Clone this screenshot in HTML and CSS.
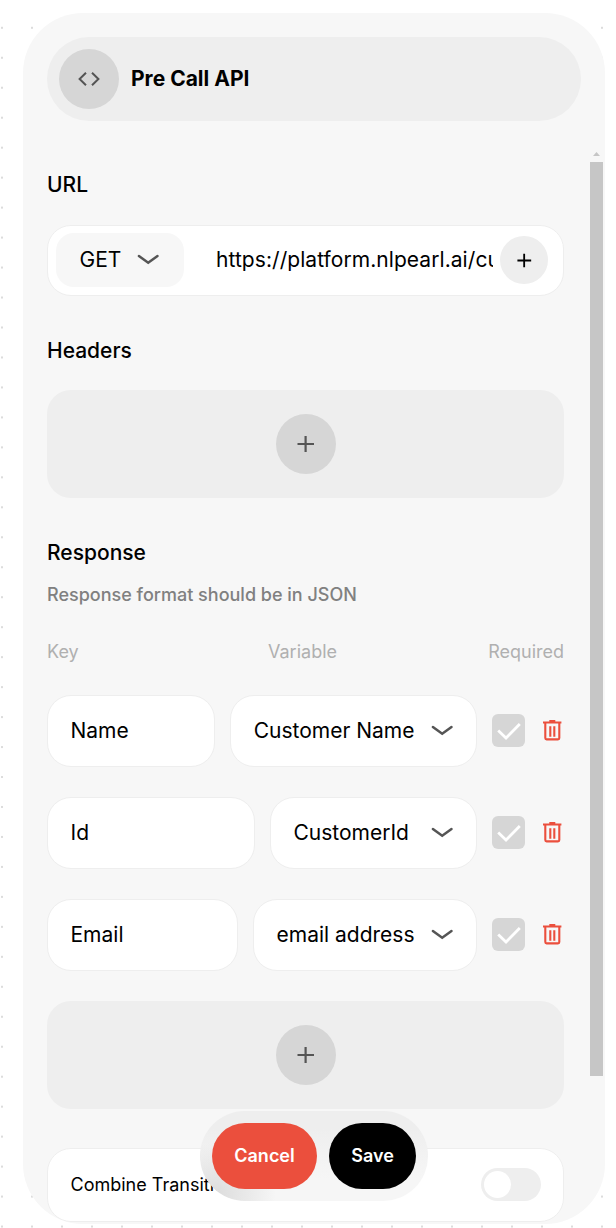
FILE: index.html
```
<!DOCTYPE html>
<html lang="en">
<head>
<meta charset="utf-8">
<title>Pre Call API</title>
<link rel="stylesheet" href="styles.css">
</head>
<body>
<svg class="defs" width="0" height="0" aria-hidden="true">
  <symbol id="chevron" viewBox="0 0 24 14"><path d="M2.9 3 12.2 9.8 21.5 3" fill="none" stroke="#555" stroke-width="2.5" stroke-linecap="round" stroke-linejoin="miter"/></symbol>
  <symbol id="plus" viewBox="0 0 18 18"><path d="M.5 9h16.5M8.6 1v16" fill="none" stroke="currentColor" stroke-width="2.2"/></symbol>
  <symbol id="check" viewBox="0 0 24 18"><path d="M1.2 8.6 9 16 22.8 2" fill="none" stroke="#fff" stroke-width="2.8"/></symbol>
  <symbol id="trash" viewBox="0 0 20 24"><path d="M1 4.5h18.4M7.3 3h6M3.3 5v15.1q0 1.3 1.3 1.3h11.4q1.3 0 1.3-1.3V5M8.3 8.3v10.4M12.3 8.3v10.4" fill="none" stroke="#eb4f3d" stroke-width="2.1"/></symbol>
</svg>
<main class="panel">
  <header class="header">
    <span class="circle"><svg class="code" viewBox="0 0 22 14"><path d="M8 .8 1.6 7 8 13.2M14 .8 20.4 7 14 13.2" fill="none" stroke="#555" stroke-width="2"/></svg></span>
    <h1 class="title">Pre Call API</h1>
  </header>
  <div class="scroll">
    <div class="content">
      <h2 class="heading heading-url">URL</h2>
      <div class="url-box">
        <div class="method"><span>GET</span><svg class="chevron"><use href="#chevron"/></svg></div>
        <div class="url">https://platform.nlpearl.ai/cu</div>
        <button class="url-add"><svg class="plus-small"><use href="#plus"/></svg></button>
      </div>
      <h2 class="heading heading-headers">Headers</h2>
      <div class="add-box"><button class="circle"><svg class="plus"><use href="#plus"/></svg></button></div>
      <h2 class="heading heading-response">Response</h2>
      <p class="hint">Response format should be in JSON</p>
      <div class="labels"><span>Key</span><span>Variable</span><span>Required</span></div>
      <div class="rows">
        <div class="row">
          <div class="field key">Name</div>
          <div class="field select"><span>Customer Name</span><svg class="chevron"><use href="#chevron"/></svg></div>
          <span class="checkbox"><svg class="check"><use href="#check"/></svg></span>
          <svg class="trash"><use href="#trash"/></svg>
        </div>
        <div class="row">
          <div class="field key">Id</div>
          <div class="field select"><span>CustomerId</span><svg class="chevron"><use href="#chevron"/></svg></div>
          <span class="checkbox"><svg class="check"><use href="#check"/></svg></span>
          <svg class="trash"><use href="#trash"/></svg>
        </div>
        <div class="row">
          <div class="field key">Email</div>
          <div class="field select"><span>email address</span><svg class="chevron"><use href="#chevron"/></svg></div>
          <span class="checkbox"><svg class="check"><use href="#check"/></svg></span>
          <svg class="trash"><use href="#trash"/></svg>
        </div>
      </div>
      <div class="add-box"><button class="circle"><svg class="plus"><use href="#plus"/></svg></button></div>
      <div class="combine"><span>Combine Transitions</span><span class="toggle"></span></div>
    </div>
    <div class="scrollbar"><span class="arrow"></span><span class="thumb"></span></div>
  </div>
  <footer class="actions">
    <button class="btn cancel">Cancel</button>
    <button class="btn save">Save</button>
  </footer>
</main>
</body>
</html>
```
FILE: styles.css
```
* { box-sizing: border-box; }
body {
  margin: 0;
  height: 1228px;
  padding: 13px 11px 0 23px;
  overflow: hidden;
  background: #fff conic-gradient(from 0deg at 2px 2px, transparent 75%, #dcdcdc 0) 1px 26.8px / 30px 29.98px;
  font-family: Inter, "Liberation Sans", sans-serif;
  color: #000;
}
.defs { position: absolute; }
svg { display: block; flex: none; }
button { border: 0; padding: 0; font: inherit; }
.panel {
  position: relative;
  width: 582px;
  height: 1211px;
  padding-top: 24px;
  border-radius: 60px;
  background: #f7f7f7;
  overflow: hidden;
}
.header {
  display: flex;
  align-items: center;
  gap: 12px;
  height: 84px;
  margin: 0 24px;
  padding: 0 12px;
  border-radius: 42px;
  background: #eee;
}
.circle {
  display: flex;
  align-items: center;
  justify-content: center;
  width: 60px;
  height: 60px;
  border-radius: 50%;
  background: #d6d6d6;
  color: #555;
}
.code { width: 22px; height: 14px; margin-bottom: 1px; }
.title { margin: 0; font-size: 21px; font-weight: 700; line-height: 26px; }
.scroll { display: flex; justify-content: space-between; height: 1103px; padding: 28px 2px 0 24px; }
.content { width: 517px; }
.heading { margin: 0; font-size: 21px; font-weight: 500; line-height: 26px; }
.heading-url { margin-top: 23px; }
.url-box {
  display: flex;
  align-items: center;
  height: 71px;
  margin-top: 27px;
  padding: 0 15px 1px 8px;
  border: 1px solid #eee;
  border-radius: 24px;
  background: #fff;
  font-size: 21px;
}
.method {
  display: flex;
  align-items: center;
  justify-content: space-between;
  width: 128px;
  height: 54px;
  padding: 0 24px 0 23.5px;
  border-radius: 18px;
  background: #f7f7f7;
}
.method span { padding-bottom: 2px; }
.chevron { width: 24px; height: 14px; }
.url { width: 277px; margin: 0 7px 0 32px; padding-bottom: 2px; overflow: hidden; white-space: nowrap; letter-spacing: .06px; }
.url-add {
  display: flex;
  align-items: center;
  justify-content: center;
  width: 48px;
  height: 48px;
  flex: none;
  border-radius: 50%;
  background: #eee;
  color: #000;
}
.plus-small { width: 15px; height: 15px; }
.plus { width: 18px; height: 18px; }
.heading-headers { margin-top: 42px; }
.add-box {
  display: flex;
  align-items: center;
  justify-content: center;
  height: 108px;
  border-radius: 24px;
  background: #eee;
}
.heading-headers + .add-box { margin-top: 26px; }
.heading-response { margin-top: 42px; }
.hint { margin: 18px 0 0; color: #808080; font-size: 18px; font-weight: 500; line-height: 22px; }
.labels { display: grid; grid-template-columns: 221px 1fr auto; margin-top: 35px; color: #b0b0b0; font-size: 18px; font-weight: 400; line-height: 22px; }
.rows { display: grid; gap: 30px; margin: 32px 0 30px; }
.row { display: flex; align-items: center; height: 72px; }
.field {
  display: flex;
  align-items: center;
  height: 72px;
  padding: 0 22.5px 2px;
  border: 1px solid #eee;
  border-radius: 24px;
  background: #fff;
  font-size: 21px;
}
.key { flex: 1; margin-right: 15px; }
.select { justify-content: space-between; gap: 15px; min-width: 207px; white-space: nowrap; }
.select .chevron { margin-top: 2px; }
.checkbox {
  display: flex;
  align-items: center;
  justify-content: center;
  width: 33px;
  height: 33px;
  margin: 0 17px 1px 15px;
  border-radius: 6px;
  background: #d6d6d6;
}
.check { width: 24px; height: 18px; }
.trash { width: 20px; height: 24px; margin: 0 2px 2px 0; }
.combine {
  display: flex;
  align-items: center;
  justify-content: space-between;
  height: 74px;
  margin-top: 39px;
  padding: 0 22px 0 22.5px;
  border: 1px solid #eee;
  border-radius: 24px;
  background: #fff;
  font-size: 18px;
}
.combine > span:first-child { padding-bottom: 2px; }
.toggle { display: flex; align-items: center; width: 60px; height: 33px; margin-bottom: 1px; padding-left: 3px; border-radius: 17px; background: #eee; }
.toggle::before { content: ""; width: 27px; height: 27px; border-radius: 50%; background: #fff; }
.scrollbar { width: 13px; padding-top: 3px; }
.arrow { display: block; width: 7px; height: 4px; margin: 0 3px 6px; background: #c6c6c6; clip-path: polygon(50% 0, 100% 100%, 0 100%); }
.thumb { display: block; height: 914px; background: #c6c6c6; }
.actions {
  position: absolute;
  left: 177px;
  bottom: 23px;
  display: flex;
  gap: 12px;
  padding: 12px;
  border-radius: 45px;
  background:
    radial-gradient(ellipse 60px 50px at 16px 82px, rgba(212, 212, 212, .75), rgba(222, 222, 222, .5) 55%, transparent),
    linear-gradient(#eee 20%, #f6f6f6 75%);
}
.btn { height: 66px; padding-bottom: 1px; border-radius: 33px; color: #fff; font-size: 18px; font-weight: 600; }
.cancel { width: 105px; background: #eb4f3d; }
.save { width: 87px; background: #000; }
```
